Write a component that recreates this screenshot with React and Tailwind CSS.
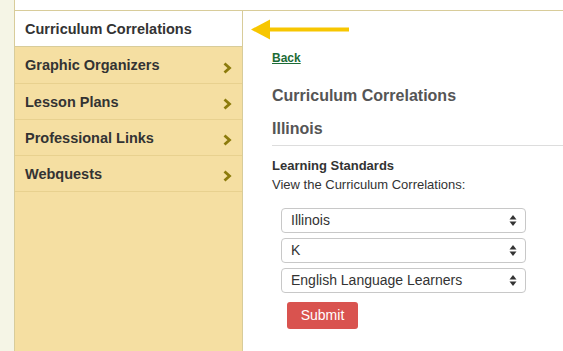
import React from "react";

const items = ["Graphic Organizers", "Lesson Plans", "Professional Links", "Webquests"];

function Chevron() {
  return (
    <svg width="9" height="12" viewBox="0 0 9 12" className="mt-[3px]">
      <path d="M1.5 1.5 L6.5 6 L1.5 10.5" fill="none" stroke="#8c7b0c" strokeWidth="2.8" />
    </svg>
  );
}

function Select({ value }) {
  return (
    <div className="flex items-center justify-between h-[25px] w-[245px] border border-[#c8c8c8] rounded-[4px] bg-white pl-[9px] pr-[8px] text-[14px] text-[#333]">
      <span>{value}</span>
      <svg width="8" height="13" viewBox="0 0 8 13">
        <path d="M4 1 L7.5 5.5 L0.5 5.5 Z" fill="#333" />
        <path d="M4 12 L7.5 7.5 L0.5 7.5 Z" fill="#333" />
      </svg>
    </div>
  );
}

export default function App() {
  return (
    <div className="relative flex h-[351px] w-[563px] overflow-hidden bg-white" style={{ fontFamily: '"Liberation Sans", Arial, sans-serif' }}>
      <div className="w-[14px] shrink-0 bg-[#f5f5e6]" />
      <div className="flex flex-1 flex-col border-l border-[#d8cc9a]">
        <div className="h-[11px] shrink-0 border-b border-[#d8cc9a] bg-white" />
        <div className="flex flex-1">
          <div className="w-[228px] shrink-0 border-r border-[#d8cc9a] bg-[#f5dfa2]">
            <div className="flex h-[36px] items-center border-b border-[#d8cc9a] bg-white pl-[10px] pt-[2px] text-[14.5px] font-bold text-[#333]">
              Curriculum Correlations
            </div>
            {items.map((t, i) => (
              <div key={t} className={`flex items-center justify-between border-b border-[#e8d18f] pl-[10px] pr-[10px] pt-[2px] text-[14.5px] font-bold text-[#333] ${i === 0 ? "h-[37px]" : "h-[36px]"}`}>
                <span>{t}</span>
                <Chevron />
              </div>
            ))}
          </div>
          <div className="flex-1 pl-[29px]">
            <div className="mt-[40px] text-[12px] font-bold leading-[14px] text-[#1c6b36] underline">Back</div>
            <div className="mt-[22px] text-[16px] font-bold leading-[18px] text-[#555]">Curriculum Correlations</div>
            <div className="mt-[15px] text-[16px] font-bold leading-[18px] text-[#555]">Illinois</div>
            <div className="mt-[7px] h-px bg-[#ddd]" />
            <div className="mt-[12px] text-[13px] font-bold leading-[16px] text-[#333]">Learning Standards</div>
            <div className="mt-[3px] text-[13px] leading-[16px] text-[#333]">View the Curriculum Correlations:</div>
            <div className="ml-[9px] mt-[15px] flex flex-col gap-[5px]">
              <Select value="Illinois" />
              <Select value="K" />
              <Select value="English Language Learners" />
            </div>
            <button className="ml-[15px] mt-[9px] h-[27px] w-[71px] rounded-[3px] bg-[#d9534f] text-[14px] text-white">Submit</button>
          </div>
        </div>
      </div>
      <svg className="absolute left-[251px] top-[19px]" width="99" height="21" viewBox="0 0 99 21">
        <path d="M0 10.5 L19 0.5 L19 20.5 Z" fill="#f7c600" />
        <rect x="18" y="8.5" width="80" height="4" fill="#f7c600" />
      </svg>
    </div>
  );
}
